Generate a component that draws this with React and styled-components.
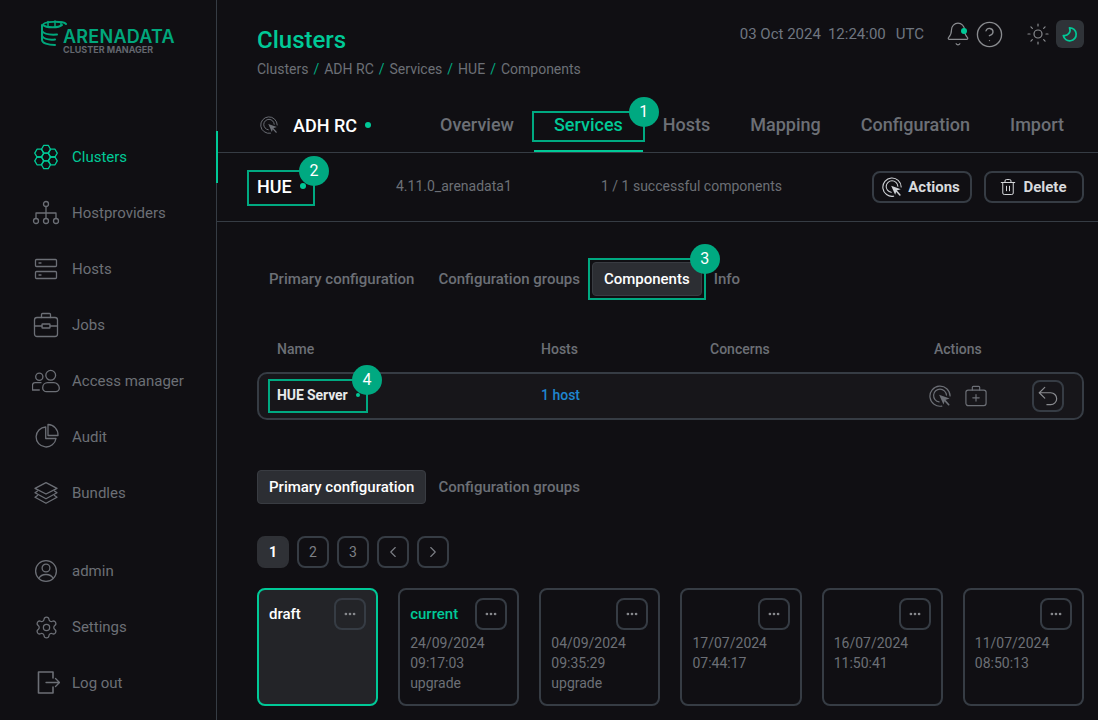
import React from "react";
import styled, { createGlobalStyle } from "styled-components";
import { Bell, CircleHelp, Sun, Trash2, Undo2, ChevronLeft, ChevronRight, Settings, Ellipsis } from "lucide-react";

const GREEN = "#00c997";
const MARK = "#00a981";
const LINE = "#363c44";
const MUTED = "#6c6f76";

const GlobalStyle = createGlobalStyle`
	html, body {
		margin: 0;
		padding: 0;
		height: 720px;
		overflow: hidden;
		background: #100f13;
	}
	* {
		box-sizing: border-box;
	}
	body {
		font-family: Roboto, "Liberation Sans", sans-serif;
		font-size: 14px;
		color: ${MUTED};
	}
`;

const Page = styled.div`
	display: flex;
	width: 1098px;
	height: 720px;
	overflow: hidden;
`;

const Sidebar = styled.aside`
	width: 217px;
	flex: none;
	height: 720px;
	border-right: 1px solid ${LINE};
	position: relative;
`;

const Logo = styled.div`
	height: 131px;
	padding: 20px 0 0 41px;
`;

const LogoRow = styled.div`
	display: flex;
	height: 36px;
	position: relative;
`;

const LogoName = styled.span`
	font-family: Inter, sans-serif;
	font-size: 18px;
	font-weight: 600;
	letter-spacing: 0.25px;
	line-height: 14px;
	height: 14px;
	color: #00a77c;
	margin: 10px 0 0 -5px;
`;

const LogoSub = styled.span`
	position: absolute;
	left: 22px;
	top: 26px;
	font-family: Inter, sans-serif;
	font-size: 9px;
	font-weight: 700;
	line-height: 8px;
	color: #63666e;
	white-space: nowrap;
`;

const NavGroup = styled.nav`
	display: flex;
	flex-direction: column;
	gap: 4px;
	margin-bottom: 26px;
`;

const NavItem = styled.a`
	display: flex;
	align-items: center;
	height: 52px;
	padding-left: 32px;
	gap: 12px;
	font-size: 15px;
	color: ${(props) => (props.$active ? GREEN : MUTED)};
	position: relative;
	${(props) =>
		props.$active &&
		`
		&::after {
			content: "";
			position: absolute;
			right: -2px;
			top: 0;
			width: 2px;
			height: 52px;
			background: ${GREEN};
		}
	`}
`;

const NavIconBox = styled.span`
	display: flex;
	align-items: center;
	justify-content: center;
	width: 28px;
	height: 28px;
`;

const Main = styled.main`
	flex: 1;
	min-width: 0;
`;

const Header = styled.header`
	display: flex;
	justify-content: space-between;
	height: 100px;
	padding: 20px 14px 0 40px;
`;

const Title = styled.h1`
	margin: 6px 0 0;
	font-size: 24px;
	font-weight: 500;
	line-height: 28px;
	color: ${GREEN};
`;

const Crumbs = styled.div`
	display: flex;
	gap: 5px;
	margin-top: 7px;
	line-height: 16px;
	color: ${MUTED};
`;

const CrumbSep = styled.span`
	color: ${MARK};
`;

const TopRight = styled.div`
	display: flex;
	align-items: center;
	height: 28px;
	color: #6f7680;
`;

const Clock = styled.div`
	display: flex;
	gap: 7px;
	margin-right: 21px;
	font-size: 15px;
`;

const ClockZone = styled.span`
	margin-left: 3px;
`;

const BellWrap = styled.div`
	position: relative;
	display: flex;
	margin-right: 4px;
	color: #8a8c90;
`;

const BellDot = styled.span`
	position: absolute;
	right: 4px;
	top: 7px;
	width: 6px;
	height: 6px;
	border-radius: 50%;
	background: ${GREEN};
`;

const ThemeOn = styled.div`
	display: flex;
	align-items: center;
	justify-content: center;
	width: 28px;
	height: 28px;
	border-radius: 6px;
	background: #2f3338;
	margin-left: 6px;
`;

const TabsBar = styled.div`
	display: flex;
	align-items: stretch;
	justify-content: space-between;
	height: 53px;
	padding: 0 14px 0 43px;
	border-bottom: 1px solid ${LINE};
`;

const ClusterName = styled.div`
	display: flex;
	align-items: center;
	gap: 15px;
	height: 50px;
	font-size: 18px;
	font-weight: 500;
	color: #fff;
`;

const ClusterLabel = styled.span`
	display: flex;
	align-items: center;
`;

const Dot = styled.span`
	display: inline-block;
	width: ${(props) => props.$size || 6}px;
	height: ${(props) => props.$size || 6}px;
	margin-left: ${(props) => props.$gap || 8}px;
	border-radius: 50%;
	background: ${GREEN};
`;

const Tabs = styled.div`
	display: flex;
`;

const Tab = styled.div`
	position: relative;
	display: flex;
	align-items: center;
	height: 52px;
	padding: 0 20px ${(props) => (props.$active ? 2 : 4)}px;
	font-size: 18px;
	font-weight: 500;
	color: ${(props) => (props.$active ? GREEN : MUTED)};
	${(props) => props.$active && `border-bottom: 2px solid ${GREEN};`}
`;

/* green annotation frames and their numbered badges lie over the page */
const Frame = styled.span`
	position: absolute;
	top: ${(props) => props.$top}px;
	bottom: ${(props) => props.$bottom}px;
	left: ${(props) => props.$left}px;
	right: ${(props) => props.$right}px;
	border: 2px solid ${MARK};
	pointer-events: none;
`;

const Badge = styled.span`
	position: absolute;
	top: -16px;
	right: -16px;
	width: 30px;
	height: 30px;
	border-radius: 50%;
	background: ${MARK};
	color: #fff;
	font-size: 16px;
	line-height: 30px;
	text-align: center;
	font-weight: 400;
`;

const ServiceBar = styled.div`
	display: flex;
	align-items: center;
	height: 69px;
	padding: 0 14px 0 40px;
	border-bottom: 1px solid ${LINE};
`;

const ServiceName = styled.div`
	position: relative;
	display: flex;
	align-items: center;
	width: 139px;
	padding-bottom: 2px;
	font-size: 18px;
	font-weight: 500;
	color: #fff;
`;

const ServiceInfo = styled.div`
	width: ${(props) => props.$width || "auto"};
	padding-bottom: 2px;
	font-size: 14px;
	color: ${MUTED};
`;

const ServiceActions = styled.div`
	display: flex;
	gap: 12px;
	margin-left: auto;
`;

const OutlineButton = styled.button`
	display: flex;
	align-items: center;
	justify-content: center;
	gap: 6px;
	width: 100px;
	height: 32px;
	padding: 0 2px 0 0;
	background: none;
	border: 2px solid ${LINE};
	border-radius: 8px;
	font-family: inherit;
	font-size: 15px;
	font-weight: 700;
	color: #d8dadd;
`;

const Content = styled.div`
	padding: 40px 14px 0 40px;
`;

const SubNav = styled.div`
	display: flex;
`;

const SubTab = styled.div`
	position: relative;
	display: flex;
	align-items: center;
	height: 34px;
	padding: 0 11px;
	font-size: 15px;
	font-weight: 500;
	border-radius: 4px;
	border: 1px solid ${(props) => (props.$active ? "#393c42" : "transparent")};
	background: ${(props) => (props.$active ? "#2c2e33" : "transparent")};
	color: ${(props) => (props.$active ? "#fff" : MUTED)};
`;

const TableGrid = styled.div`
	display: grid;
	grid-template-columns: 264px 169px 224px 1fr;
	padding-left: 20px;
	align-items: center;
`;

const TableHead = styled(TableGrid)`
	margin-top: 41px;
	height: 24px;
	font-weight: 500;
	color: ${MUTED};
`;

const TableRow = styled(TableGrid)`
	margin-top: 11px;
	height: 48px;
	border: 2px solid ${LINE};
	border-radius: 10px;
	background: #17161a;
	padding-left: 18px;
`;

const RowName = styled.div`
	position: relative;
	display: flex;
	align-items: center;
	margin-top: -2px;
	font-weight: 700;
	color: #e8e9ea;
	letter-spacing: -0.1px;
`;

const HostLink = styled.a`
	margin-top: -2px;
	font-weight: 500;
	color: #1f86d0;
`;

const RowIcons = styled.div`
	display: flex;
	align-items: center;
	margin-left: -5px;
	color: #6c6f76;
`;

const IconGap = styled.div`
	margin-left: ${(props) => props.$gap}px;
	display: flex;
`;

const IconButton = styled.button`
	display: flex;
	align-items: center;
	justify-content: center;
	width: 32px;
	height: 32px;
	padding: 0;
	background: none;
	border: 2px solid ${LINE};
	border-radius: 8px;
	color: ${(props) => props.$color || "#8a8c90"};
	margin-left: ${(props) => props.$gap || 0}px;
`;

const ConfigNav = styled(SubNav)`
	margin-top: 50px;
`;

const Pager = styled.div`
	display: flex;
	gap: 8px;
	margin-top: 32px;
`;

const PageButton = styled.button`
	display: flex;
	align-items: center;
	justify-content: center;
	width: 32px;
	height: 32px;
	padding: 0;
	border-radius: 8px;
	font-family: inherit;
	font-size: 14px;
	font-weight: ${(props) => (props.$active ? 700 : 400)};
	color: ${(props) => (props.$active ? "#fff" : "#7c7f85")};
	background: ${(props) => (props.$active ? "#2f3136" : "none")};
	border: 2px solid ${(props) => (props.$active ? "#2f3136" : LINE)};
`;

const Cards = styled.div`
	display: grid;
	grid-template-columns: repeat(6, 1fr);
	gap: 20px;
	margin-top: 20px;
`;

const Card = styled.div`
	position: relative;
	height: 118px;
	padding: 14px 10px 0;
	border: 2px solid ${(props) => (props.$active ? GREEN : LINE)};
	border-radius: 8px;
	background: ${(props) => (props.$active ? "#232428" : "transparent")};
	line-height: 20px;
	color: ${MUTED};
`;

const CardTitle = styled.div`
	height: 20px;
	margin-bottom: 9px;
	font-size: 15px;
	font-weight: 500;
	color: ${(props) => (props.$current ? GREEN : "#fff")};
`;

const CardMore = styled(IconButton)`
	position: absolute;
	top: 8px;
	right: 10px;
`;

const R = 4.5;
const DX = 6.75;
const DY = 7.8;
const CLUSTER_HEX = [
	[14, 14],
	[14, 14 - DY],
	[14, 14 + DY],
	[14 - DX, 14 - DY / 2],
	[14 + DX, 14 - DY / 2],
	[14 - DX, 14 + DY / 2],
	[14 + DX, 14 + DY / 2],
];

const hexPoints = (cx, cy, r) =>
	[0, 60, 120, 180, 240, 300]
		.map((a) => {
			const rad = (a * Math.PI) / 180;
			return `${(cx + r * Math.cos(rad)).toFixed(2)},${(cy + r * Math.sin(rad)).toFixed(2)}`;
		})
		.join(" ");

const NavSvg = ({ children, sw = 1.3 }) => (
	<svg
		width="28"
		height="28"
		viewBox="0 0 28 28"
		fill="none"
		stroke="currentColor"
		strokeWidth={sw}
		strokeLinecap="round"
		strokeLinejoin="round">
		{children}
	</svg>
);

const ClustersIcon = () => (
	<NavSvg>
		{CLUSTER_HEX.map(([x, y]) => (
			<polygon key={`${x}-${y}`} points={hexPoints(x, y, R)} />
		))}
	</NavSvg>
);

const ProvidersIcon = () => (
	<NavSvg>
		<circle cx="14" cy="5" r="2.5" />
		<circle cx="4" cy="22" r="2.5" />
		<circle cx="14" cy="22" r="2.5" />
		<circle cx="24" cy="22" r="2.5" />
		<path d="M14 7.5v12M4 19.5v-5.5h20v5.5" />
	</NavSvg>
);

const HostsIcon = () => (
	<NavSvg>
		<rect x="3.5" y="4.5" width="21" height="7" rx="1" />
		<rect x="3.5" y="16.5" width="21" height="7" rx="1" />
		<path d="M7 8h2M7 20h2" />
	</NavSvg>
);

const JobsIcon = () => (
	<NavSvg>
		<rect x="2.5" y="6.5" width="23" height="19" rx="2.5" />
		<path d="M9.5 6.5v-3a1 1 0 0 1 1-1h7a1 1 0 0 1 1 1v3M2.5 15h7.5M18 15h7.5" />
		<rect x="10" y="13" width="8" height="4" rx="0.6" />
	</NavSvg>
);

const AccessIcon = () => (
	<NavSvg>
		<circle cx="7.3" cy="9.7" r="3.6" />
		<circle cx="18.7" cy="8.3" r="4.9" />
		<path d="M9 15.7H3a2.5 2.5 0 0 0-2.5 2.5V23h6.8" />
		<path d="M10.7 20.5a5 5 0 0 1 5-4.8h6a5.6 5.6 0 0 1 5.6 5.4 3.6 3.6 0 0 1-3.6 3.6h-9.2a3.8 3.8 0 0 1-3.8-3.8z" />
	</NavSvg>
);

const AuditIcon = () => (
	<NavSvg>
		<path d="M13.7 4A10 10 0 1 0 24 15.5H13.7z" />
		<path d="M16 1.5A10.4 10.4 0 0 1 26 12.5H16z" />
	</NavSvg>
);

const BundlesIcon = () => (
	<NavSvg>
		<path d="M14 3.7L25 9.4 14 15 3 9.4z" />
		<path d="M5.5 12L3 13.8l11 6 11-6L22.5 12" />
		<path d="M5.5 16.5L3 18.3l11 6 11-6-2.5-1.8" />
	</NavSvg>
);

const AdminIcon = () => (
	<NavSvg>
		<circle cx="14" cy="14" r="10.4" />
		<circle cx="14" cy="11" r="3.9" />
		<path d="M6.8 21.5a7.8 6.5 0 0 1 14.4 0" />
	</NavSvg>
);

const LogoutIcon = () => (
	<NavSvg>
		<path d="M21 9V3H6.5v21H21v-6" strokeWidth="1.6" />
		<path d="M14 13.5h13.5M23.5 9.5l4 4-4 4" />
	</NavSvg>
);

const ActionIcon = ({ size = 22, color = "currentColor" }) => (
	<svg width={size} height={size} viewBox="0 0 24 24" fill="none" stroke={color} strokeWidth="1.3" strokeLinecap="round">
		<path d="M14 23A11 11 0 1 1 23 12" />
		<path d="M11 18.4A7 7 0 1 1 19 11" />
		<path d="M11 10.5l11.5 4.2-5 1.6-1.7 5z" fill={color} stroke="none" />
		<path d="M17 16.5l4.500 5" strokeWidth="1.8" />
	</svg>
);

const AddJobIcon = () => (
	<svg width="22" height="22" viewBox="0 0 24 24" fill="none" stroke="currentColor" strokeWidth="1.3" strokeLinecap="round" strokeLinejoin="round">
		<rect x="1" y="5.5" width="22" height="17" rx="2.5" />
		<path d="M8 5.5v-3a1 1 0 0 1 1-1h6a1 1 0 0 1 1 1v3M12 10.5v7M8.5 14h7" />
	</svg>
);

const MoonIcon = () => (
	<svg width="16" height="16" viewBox="0 0 16 16" fill="none" stroke={GREEN} strokeWidth="1.7" strokeLinecap="round" strokeLinejoin="round">
		<path d="M7.5 1.8A6.5 6.5 0 1 1 1.3 9.5 5.5 5.5 0 0 0 7.5 1.8z" />
	</svg>
);

const BarrelLogo = () => (
	<svg width="27" height="26" viewBox="0 0 27 26" fill="none" stroke="#00a77c" strokeWidth="2" strokeLinecap="round">
		<path d="M2 5c0-4 20-4 23-1M2 5c3 3 16 3 19 0" />
		<path d="M7 1.5v4M14 1v5M20 2v3" strokeWidth="1.5" />
		<path d="M1 5v15c0 3 6 5 13 5" />
		<path d="M1 11c2 3 8 4 15 3.5M1 16c2 3 8 4 13 3.5" />
	</svg>
);

const configs = [
	{ title: "draft", active: true, lines: [] },
	{ title: "current", current: true, lines: ["24/09/2024", "09:17:03", "upgrade"] },
	{ lines: ["04/09/2024", "09:35:29", "upgrade"] },
	{ lines: ["17/07/2024", "07:44:17"] },
	{ lines: ["16/07/2024", "11:50:41"] },
	{ lines: ["11/07/2024", "08:50:13"] },
];

const App = () => (
	<Page>
		<GlobalStyle />
		<Sidebar>
			<Logo>
				<LogoRow>
					<BarrelLogo />
					<LogoName>ARENADATA</LogoName>
					<LogoSub>CLUSTER MANAGER</LogoSub>
				</LogoRow>
			</Logo>
			<NavGroup>
				<NavItem $active>
					<ClustersIcon />
					Clusters
				</NavItem>
				<NavItem>
					<ProvidersIcon />
					Hostproviders
				</NavItem>
				<NavItem>
					<HostsIcon />
					Hosts
				</NavItem>
				<NavItem>
					<JobsIcon />
					Jobs
				</NavItem>
				<NavItem>
					<AccessIcon />
					Access manager
				</NavItem>
				<NavItem>
					<AuditIcon />
					Audit
				</NavItem>
				<NavItem>
					<BundlesIcon />
					Bundles
				</NavItem>
			</NavGroup>
			<NavGroup>
				<NavItem>
					<AdminIcon />
					admin
				</NavItem>
				<NavItem>
					<NavIconBox>
						<Settings size={25} strokeWidth={1.2} />
					</NavIconBox>
					Settings
				</NavItem>
				<NavItem>
					<LogoutIcon />
					Log out
				</NavItem>
			</NavGroup>
		</Sidebar>
		<Main>
			<Header>
				<div>
					<Title>Clusters</Title>
					<Crumbs>
						<span>Clusters</span>
						<CrumbSep>/</CrumbSep>
						<span>ADH RC</span>
						<CrumbSep>/</CrumbSep>
						<span>Services</span>
						<CrumbSep>/</CrumbSep>
						<span>HUE</span>
						<CrumbSep>/</CrumbSep>
						<span>Components</span>
					</Crumbs>
				</div>
				<TopRight>
					<Clock>
						<span>03 Oct 2024</span>
						<span>12:24:00</span>
						<ClockZone>UTC</ClockZone>
					</Clock>
					<BellWrap>
						<Bell size={26} strokeWidth={1.1} />
						<BellDot />
					</BellWrap>
					<CircleHelp size={29} strokeWidth={1.1} color="#8a8c90" />
					<IconGap $gap={22}>
						<Sun size={24} strokeWidth={1.2} color="#8a8c90" />
					</IconGap>
					<ThemeOn>
						<MoonIcon />
					</ThemeOn>
				</TopRight>
			</Header>
			<TabsBar>
				<ClusterName>
					<ActionIcon size={18} color="#6c6f76" />
					<ClusterLabel>
						ADH RC
						<Dot />
					</ClusterLabel>
				</ClusterName>
				<Tabs>
					<Tab>Overview</Tab>
					<Tab $active>
						Services
						<Frame $top={11} $bottom={8} $left={-2} $right={-2}>
							<Badge>1</Badge>
						</Frame>
					</Tab>
					<Tab>Hosts</Tab>
					<Tab>Mapping</Tab>
					<Tab>Configuration</Tab>
					<Tab>Import</Tab>
				</Tabs>
			</TabsBar>
			<ServiceBar>
				<ServiceName>
					HUE
					<Dot $gap={8} />
					<Frame $top={-6} $bottom={-7} $left={-10} $right={81}>
						<Badge>2</Badge>
					</Frame>
				</ServiceName>
				<ServiceInfo $width="205px">4.11.0_arenadata1</ServiceInfo>
				<ServiceInfo>1 / 1 successful components</ServiceInfo>
				<ServiceActions>
					<OutlineButton>
						<ActionIcon size={20} color="#cfd2d6" />
						Actions
					</OutlineButton>
					<OutlineButton>
						<Trash2 size={18} strokeWidth={1.3} />
						Delete
					</OutlineButton>
				</ServiceActions>
			</ServiceBar>
			<Content>
				<SubNav>
					<SubTab>Primary configuration</SubTab>
					<SubTab>Configuration groups</SubTab>
					<SubTab $active>
						Components
						<Frame $top={-5} $bottom={-5} $left={-5} $right={-5}>
							<Badge>3</Badge>
						</Frame>
					</SubTab>
					<SubTab>Info</SubTab>
				</SubNav>
				<TableHead>
					<span>Name</span>
					<span>Hosts</span>
					<span>Concerns</span>
					<span>Actions</span>
				</TableHead>
				<TableRow>
					<RowName>
						HUE Server
						<Dot $size={4} $gap={8} />
						<Frame $top={-8} $bottom={-10} $left={-9} $right={173}>
							<Badge>4</Badge>
						</Frame>
					</RowName>
					<HostLink>1 host</HostLink>
					<span />
					<RowIcons>
						<ActionIcon size={22} />
						<IconGap $gap={14}>
							<AddJobIcon />
						</IconGap>
						<IconButton $gap={45}>
							<Undo2 size={26} strokeWidth={1.1} />
						</IconButton>
					</RowIcons>
				</TableRow>
				<ConfigNav>
					<SubTab $active>Primary configuration</SubTab>
					<SubTab>Configuration groups</SubTab>
				</ConfigNav>
				<Pager>
					<PageButton $active>1</PageButton>
					<PageButton>2</PageButton>
					<PageButton>3</PageButton>
					<PageButton>
						<ChevronLeft size={18} strokeWidth={1.5} />
					</PageButton>
					<PageButton>
						<ChevronRight size={18} strokeWidth={1.5} />
					</PageButton>
				</Pager>
				<Cards>
					{configs.map((config, i) => (
						<Card key={i} $active={config.active}>
							<CardTitle $current={config.current}>{config.title}</CardTitle>
							{config.lines.map((line) => (
								<div key={line}>{line}</div>
							))}
							<CardMore>
								<Ellipsis size={14} strokeWidth={2.6} />
							</CardMore>
						</Card>
					))}
				</Cards>
			</Content>
		</Main>
	</Page>
);

export default App;
